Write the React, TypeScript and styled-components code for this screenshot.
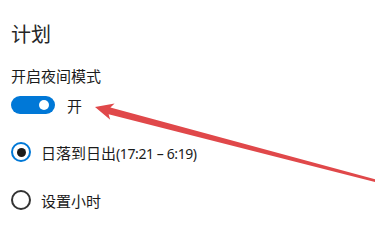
import React from "react";
import styled, { createGlobalStyle } from "styled-components";

const GlobalStyle = createGlobalStyle`
  html, body {
    margin: 0;
    padding: 0;
    background: #ffffff;
  }
  body {
    font-family: "Noto Sans", "Noto Sans CJK SC", sans-serif;
    color: #1b1b1b;
  }
`;

const Page = styled.div`
  position: relative;
  width: 375px;
  height: 251px;
  overflow: hidden;
  padding: 21px 0 0 11px;
  box-sizing: border-box;
  display: flex;
  flex-direction: column;
`;

const Title = styled.h2`
  margin: 0;
  font-family: "Noto Sans CJK SC", sans-serif;
  font-weight: 400;
  font-size: 20px;
  line-height: 26px;
  color: #262626;
`;

const Label = styled.div`
  margin-top: 19px;
  font-family: "Noto Sans CJK SC", sans-serif;
  font-size: 15px;
  line-height: 20px;
`;

const ToggleRow = styled.div`
  display: flex;
  align-items: center;
  gap: 12px;
  margin-top: 9px;
  height: 20px;
`;

const Toggle = styled.div<{ $on: boolean }>`
  width: 44px;
  height: 18px;
  border-radius: 9px;
  background: ${(p) => (p.$on ? "#0078d7" : "transparent")};
  border: ${(p) => (p.$on ? "none" : "2px solid #333")};
  display: flex;
  align-items: center;
  justify-content: ${(p) => (p.$on ? "flex-end" : "flex-start")};
  padding: 0 6px;
  box-sizing: border-box;
`;

const Knob = styled.div`
  width: 10px;
  height: 10px;
  border-radius: 50%;
  background: #ffffff;
`;

const ToggleText = styled.span`
  font-family: "Noto Sans CJK SC", sans-serif;
  font-size: 15px;
`;

const RadioList = styled.div`
  display: flex;
  flex-direction: column;
  gap: 28px;
  margin-top: 27px;
`;

const RadioRow = styled.label`
  display: flex;
  align-items: center;
  gap: 10px;
  height: 20px;
`;

const RadioCircle = styled.span<{ $checked: boolean }>`
  width: 20px;
  height: 20px;
  border-radius: 50%;
  box-sizing: border-box;
  border: 2px solid ${(p) => (p.$checked ? "#0078d7" : "#333333")};
  display: flex;
  align-items: center;
  justify-content: center;
  &::after {
    content: "";
    display: ${(p) => (p.$checked ? "block" : "none")};
    width: 9px;
    height: 9px;
    border-radius: 50%;
    background: #1b1b1b;
  }
`;

const RadioText = styled.span`
  font-family: "Noto Sans CJK SC", sans-serif;
  font-size: 15px;
`;

const Time = styled.span`
  font-family: "Noto Sans", sans-serif;
  font-size: 14px;
  letter-spacing: -0.4px;
`;

const Arrow = styled.svg`
  position: absolute;
  left: 0;
  top: 0;
  pointer-events: none;
`;

function arrowPoints() {
  const tip = [95, 107];
  const tail = [380, 182];
  const dx = tail[0] - tip[0];
  const dy = tail[1] - tip[1];
  const len = Math.hypot(dx, dy);
  const d = [dx / len, dy / len];
  const n = [-d[1], d[0]];
  const headLen = 18;
  const headHalf = 8.5;
  const base = [tip[0] + d[0] * headLen, tip[1] + d[1] * headLen];
  const neck = [tip[0] + d[0] * (headLen - 3), tip[1] + d[1] * (headLen - 3)];
  const shaftStart = 3.5;
  const shaftEnd = 1.2;
  const pts = [
    tip,
    [base[0] - n[0] * headHalf, base[1] - n[1] * headHalf],
    [neck[0] - n[0] * shaftStart, neck[1] - n[1] * shaftStart],
    [tail[0] - n[0] * shaftEnd, tail[1] - n[1] * shaftEnd],
    [tail[0] + n[0] * shaftEnd, tail[1] + n[1] * shaftEnd],
    [neck[0] + n[0] * shaftStart, neck[1] + n[1] * shaftStart],
    [base[0] + n[0] * headHalf, base[1] + n[1] * headHalf],
  ];
  return pts.map((p) => `${p[0].toFixed(1)},${p[1].toFixed(1)}`).join(" ");
}

const App: React.FC = () => {
  return (
    <>
      <GlobalStyle />
      <Page>
        <Title>计划</Title>
        <Label>开启夜间模式</Label>
        <ToggleRow>
          <Toggle $on>
            <Knob />
          </Toggle>
          <ToggleText>开</ToggleText>
        </ToggleRow>
        <RadioList>
          <RadioRow>
            <RadioCircle $checked />
            <RadioText>
              日落到日出<Time>(17:21 – 6:19)</Time>
            </RadioText>
          </RadioRow>
          <RadioRow>
            <RadioCircle $checked={false} />
            <RadioText>设置小时</RadioText>
          </RadioRow>
        </RadioList>
        <Arrow width="375" height="251" viewBox="0 0 375 251">
          <polygon points={arrowPoints()} fill="#e0484a" />
        </Arrow>
      </Page>
    </>
  );
};

export default App;
